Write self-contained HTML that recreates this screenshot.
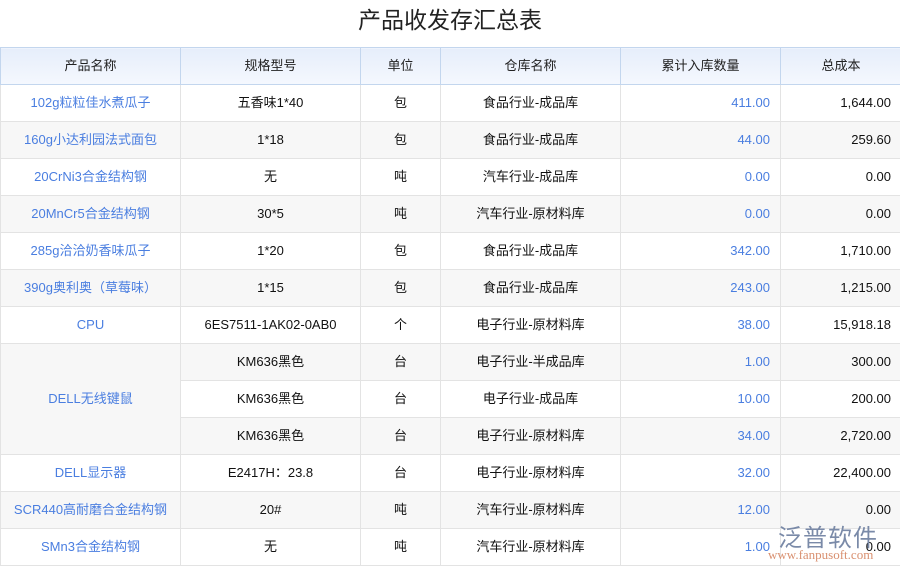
<!DOCTYPE html>
<html><head><meta charset="utf-8"><style>
body{margin:0;width:900px;height:567px;overflow:hidden;background:#fff;font-family:"Liberation Sans","Noto Sans CJK SC",sans-serif;position:relative}
h1{margin:0;height:47px;line-height:40px;text-align:center;font-weight:normal;font-size:23px;color:#222}
table{border-collapse:collapse;width:901px;table-layout:fixed;font-size:13px;color:#111}
th{height:36px;padding:0;font-weight:normal;background:linear-gradient(#e6eefb,#f5f8fe);border:1px solid #c3d6ee;color:#222;line-height:34px}
td{height:36px;border:1px solid #e3e3e3;text-align:center;padding:0;line-height:36px;vertical-align:top}
tr.g td{background:#f7f7f7}
td.m{vertical-align:middle}
.b{color:#4a7ee0}
td.r{text-align:right;padding-right:10px}
.wm{position:absolute;left:778px;top:518px;color:#7a8aa8;font-size:24px;letter-spacing:1px}
.wm2{position:absolute;left:768px;top:547px;color:#d99070;font-size:13px;font-family:"Liberation Serif",serif}
</style></head><body>
<h1>产品收发存汇总表</h1>
<table>
<colgroup><col style="width:180px"><col style="width:180px"><col style="width:80px"><col style="width:180px"><col style="width:160px"><col style="width:121px"></colgroup>
<tr><th>产品名称</th><th>规格型号</th><th>单位</th><th>仓库名称</th><th>累计入库数量</th><th>总成本</th></tr>
<tr><td class="b">102g粒粒佳水煮瓜子</td><td>五香味1*40</td><td>包</td><td>食品行业-成品库</td><td class="b r">411.00</td><td class="r">1,644.00</td></tr>
<tr class="g"><td class="b">160g小达利园法式面包</td><td>1*18</td><td>包</td><td>食品行业-成品库</td><td class="b r">44.00</td><td class="r">259.60</td></tr>
<tr><td class="b">20CrNi3合金结构钢</td><td>无</td><td>吨</td><td>汽车行业-成品库</td><td class="b r">0.00</td><td class="r">0.00</td></tr>
<tr class="g"><td class="b">20MnCr5合金结构钢</td><td>30*5</td><td>吨</td><td>汽车行业-原材料库</td><td class="b r">0.00</td><td class="r">0.00</td></tr>
<tr><td class="b">285g洽洽奶香味瓜子</td><td>1*20</td><td>包</td><td>食品行业-成品库</td><td class="b r">342.00</td><td class="r">1,710.00</td></tr>
<tr class="g"><td class="b">390g奥利奥（草莓味）</td><td>1*15</td><td>包</td><td>食品行业-成品库</td><td class="b r">243.00</td><td class="r">1,215.00</td></tr>
<tr><td class="b">CPU</td><td>6ES7511-1AK02-0AB0</td><td>个</td><td>电子行业-原材料库</td><td class="b r">38.00</td><td class="r">15,918.18</td></tr>
<tr class="g"><td class="b m" rowspan="3">DELL无线键鼠</td><td>KM636黑色</td><td>台</td><td>电子行业-半成品库</td><td class="b r">1.00</td><td class="r">300.00</td></tr>
<tr><td>KM636黑色</td><td>台</td><td>电子行业-成品库</td><td class="b r">10.00</td><td class="r">200.00</td></tr>
<tr class="g"><td>KM636黑色</td><td>台</td><td>电子行业-原材料库</td><td class="b r">34.00</td><td class="r">2,720.00</td></tr>
<tr><td class="b">DELL显示器</td><td>E2417H：23.8</td><td>台</td><td>电子行业-原材料库</td><td class="b r">32.00</td><td class="r">22,400.00</td></tr>
<tr class="g"><td class="b">SCR440高耐磨合金结构钢</td><td>20#</td><td>吨</td><td>汽车行业-原材料库</td><td class="b r">12.00</td><td class="r">0.00</td></tr>
<tr><td class="b">SMn3合金结构钢</td><td>无</td><td>吨</td><td>汽车行业-原材料库</td><td class="b r">1.00</td><td class="r">0.00</td></tr>
</table>
<div class="wm">泛普软件</div>
<div class="wm2">www.fanpusoft.com</div>
</body></html>
